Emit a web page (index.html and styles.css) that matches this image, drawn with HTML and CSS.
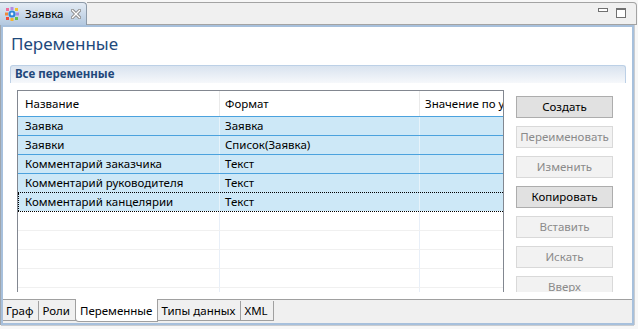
FILE: index.html
```html
<!DOCTYPE html>
<html lang="ru">
<head>
<meta charset="utf-8">
<title>Заявка</title>
<link rel="stylesheet" href="styles.css">
</head>
<body>
<div class="window">
  <div class="topbar">
    <div class="etab">
      <svg class="etab-icon" width="14" height="14" viewBox="0 0 14 14">
        <rect x="1" y="1" width="3" height="3" fill="#f06a9a"/>
        <rect x="5.5" y="0" width="3" height="3" fill="#b48ae0"/>
        <rect x="10" y="1" width="3" height="3" fill="#f3c230"/>
        <rect x="11" y="5.5" width="3" height="3" fill="#a98be6"/>
        <rect x="10" y="10" width="3" height="3" fill="#63c24a"/>
        <rect x="5.5" y="11" width="3" height="3" fill="#f5b62a"/>
        <rect x="1" y="10" width="3" height="3" fill="#ee4c3c"/>
        <rect x="0" y="5.5" width="3" height="3" fill="#f08a3a"/>
        <circle cx="7" cy="7" r="3.6" fill="#2f86d8"/>
        <circle cx="7" cy="7" r="1.4" fill="#e9f4ff"/>
      </svg>
      <span class="etab-label">Заявка</span>
      <svg class="etab-close" width="10" height="10" viewBox="0 0 10 10">
        <path d="M1.5 1.5 L8.5 8.5 M8.5 1.5 L1.5 8.5" stroke="#8c8c8c" stroke-width="3.2" stroke-linecap="square"/>
        <path d="M1.5 1.5 L8.5 8.5 M8.5 1.5 L1.5 8.5" stroke="#ffffff" stroke-width="1.3" stroke-linecap="square"/>
      </svg>
    </div>
    <div class="tabfill">
      <div class="winctl">
        <span class="ctl-min"></span>
        <span class="ctl-max"></span>
      </div>
    </div>
  </div>
  <div class="frame">
    <div class="content">
      <h1 class="title">Переменные</h1>
      <div class="section">
        <div class="section-head">Все переменные</div>
        <div class="section-body">
          <div class="grid">
            <div class="row row-head">
              <div class="cell">Название</div>
              <div class="cell">Формат</div>
              <div class="cell">Значение по умолчанию</div>
            </div>
            <div class="row row-sel">
              <div class="cell">Заявка</div>
              <div class="cell">Заявка</div>
              <div class="cell"></div>
            </div>
            <div class="row row-sel">
              <div class="cell">Заявки</div>
              <div class="cell">Список(Заявка)</div>
              <div class="cell"></div>
            </div>
            <div class="row row-sel">
              <div class="cell">Комментарий заказчика</div>
              <div class="cell">Текст</div>
              <div class="cell"></div>
            </div>
            <div class="row row-sel">
              <div class="cell">Комментарий руководителя</div>
              <div class="cell">Текст</div>
              <div class="cell"></div>
            </div>
            <div class="row row-sel row-focus">
              <div class="cell">Комментарий канцелярии</div>
              <div class="cell">Текст</div>
              <div class="cell"></div>
            </div>
            <div class="row row-empty row-after-focus"><div class="cell"></div><div class="cell"></div><div class="cell"></div></div>
            <div class="row row-empty"><div class="cell"></div><div class="cell"></div><div class="cell"></div></div>
            <div class="row row-empty"><div class="cell"></div><div class="cell"></div><div class="cell"></div></div>
            <div class="row row-empty"><div class="cell"></div><div class="cell"></div><div class="cell"></div></div>
            <div class="row row-empty"><div class="cell"></div><div class="cell"></div><div class="cell"></div></div>
          </div>
          <div class="buttons">
            <div class="btn">Создать</div>
            <div class="btn btn-off">Переименовать</div>
            <div class="btn btn-off">Изменить</div>
            <div class="btn">Копировать</div>
            <div class="btn btn-off">Вставить</div>
            <div class="btn btn-off">Искать</div>
            <div class="btn btn-off">Вверх</div>
          </div>
        </div>
      </div>
    </div>
    <div class="btabs">
      <div class="btab">Граф</div>
      <div class="btab">Роли</div>
      <div class="btab btab-on">Переменные</div>
      <div class="btab">Типы данных</div>
      <div class="btab">XML</div>
    </div>
  </div>
</div>
</body>
</html>
```

FILE: styles.css
```css
* { box-sizing: border-box; }

body {
  margin: 0;
  width: 638px;
  height: 329px;
  overflow: hidden;
  background: #f7f7f7;
  font-family: "Noto Sans", "Open Sans", sans-serif;
  font-size: 11.5px;
  color: #000;
}

.window {
  width: 638px;
  height: 329px;
  display: flex;
  flex-direction: column;
}

/* top editor tab bar */
.topbar {
  height: 25px;
  display: flex;
  flex: none;
}

.etab {
  width: 87px;
  margin-top: 2px;
  height: 23px;
  border-top: 1px solid #8d9aa8;
  border-right: 1px solid #8d9aa8;
  border-top-right-radius: 4px;
  background: linear-gradient(#e3ebf4, #b3c8df);
  display: flex;
  align-items: center;
  padding-left: 5px;
}

.etab-icon { flex: none; }

.etab-label {
  margin-left: 6px;
  line-height: 14px;
}

.etab-close {
  margin-left: 8px;
  flex: none;
}

.tabfill {
  flex: 1;
  margin-top: 2px;
  height: 23px;
  background: #f0f0f0;
  border-top: 1px solid #a3a3a3;
  border-right: 1px solid #a3a3a3;
  border-bottom: 1px solid #a3a3a3;
  border-top-right-radius: 4px;
  margin-right: 1px;
  display: flex;
  justify-content: flex-end;
}

.winctl {
  display: flex;
  align-items: flex-start;
  gap: 8px;
  padding: 5px 10px 0 0;
}

.ctl-min {
  width: 10px;
  height: 4px;
  border: 1px solid #707070;
  background: #fff;
}

.ctl-max {
  width: 10px;
  height: 10px;
  border: 1px solid #707070;
  border-top-width: 2px;
  background: #fff;
}

/* frame */
.frame {
  width: 633px;
  margin-left: 1px;
  height: 300px;
  border: 2px solid #a7c0dc;
  box-shadow: -1px 0 0 #9fa6ae, 1px 0 0 #c9ccd0, 0 1px 0 #c9ccd0;
  display: flex;
  flex-direction: column;
  flex: none;
}

.content {
  flex: 1;
  background: #fff;
  overflow: hidden;
  padding: 5px 6px 0 7px;
  min-height: 0;
}

.title {
  margin: 0 0 0 1px;
  font-size: 17px;
  font-weight: normal;
  line-height: 24px;
  color: #1f4a7c;
}

.section {
  margin-top: 9px;
}

.section-head {
  height: 18px;
  border: 1px solid #bcd0e6;
  border-bottom: none;
  border-radius: 3px 3px 0 0;
  background: linear-gradient(#d9e3ef, #f6f8fb);
  padding-left: 4px;
  font-weight: bold;
  line-height: 16px;
  color: #21477a;
}

.section-body {
  height: 209px;
  overflow: hidden;
  display: flex;
  align-items: flex-start;
  padding: 7px 0 0 7px;
}

/* table */
.grid {
  width: 487px;
  height: 210px;
  border: 1px solid #828790;
  border-bottom: none;
  overflow: hidden;
  flex: none;
}

.row {
  display: grid;
  grid-template-columns: 202px 200px 83px;
  height: 19px;
  border-top: 1px solid #f0f0f0;
}

.cell {
  padding-left: 5px;
  white-space: nowrap;
  overflow: hidden;
  line-height: 18px;
}

.cell:first-child { padding-left: 7px; }

.cell:nth-child(1),
.cell:nth-child(2) {
  border-right: 1px solid #e7eef6;
}

.row-head {
  height: 25px;
  border-top: none;
}

.row-head .cell {
  line-height: 25px;
  border-right-color: #eaeaea;
}

.row-sel {
  background: #cde8f7;
  border-top: 1px solid #4ba2de;
}

.row-sel .cell:nth-child(1),
.row-sel .cell:nth-child(2) {
  border-right-color: #e6f3fb;
}

.row-focus {
  border-top: 1px dotted #000;
}

.row-focus .cell:first-child {
  border-left: 1px dotted #000;
  padding-left: 6px;
}

.row-after-focus {
  border-top: 1px dotted #000;
}

.row-empty .cell:nth-child(1),
.row-empty .cell:nth-child(2) {
  border-right-color: #e8eff8;
}

/* buttons */
.buttons {
  margin-left: 12px;
  margin-top: 6px;
  width: 97px;
  display: flex;
  flex-direction: column;
  gap: 8px;
  flex: none;
}

.btn {
  height: 22px;
  border: 1px solid #adadad;
  background: #e1e1e1;
  text-align: center;
  line-height: 20px;
  color: #000;
  white-space: nowrap;
}

.btn-off {
  border-color: #d9d9d9;
  background: #f2f2f2;
  color: #8a8a8a;
}

/* bottom tabs */
.btabs {
  height: 24px;
  flex: none;
  border-top: 1px solid #a0a0a0;
  background: #f0f0f0;
  display: flex;
  align-items: flex-start;
}

.btab {
  height: 20px;
  margin-top: 1px;
  padding: 0 5px 0 3px;
  border-right: 1px solid #a0a0a0;
  border-bottom: 1px solid #a0a0a0;
  line-height: 19px;
}

.btab-on {
  margin-top: -1px;
  height: 23px;
  background: #fff;
  border-left: 1px solid #a0a0a0;
  border-bottom-left-radius: 4px;
  margin-left: -1px;
  padding-top: 2px;
  padding-left: 4px;
}
```
